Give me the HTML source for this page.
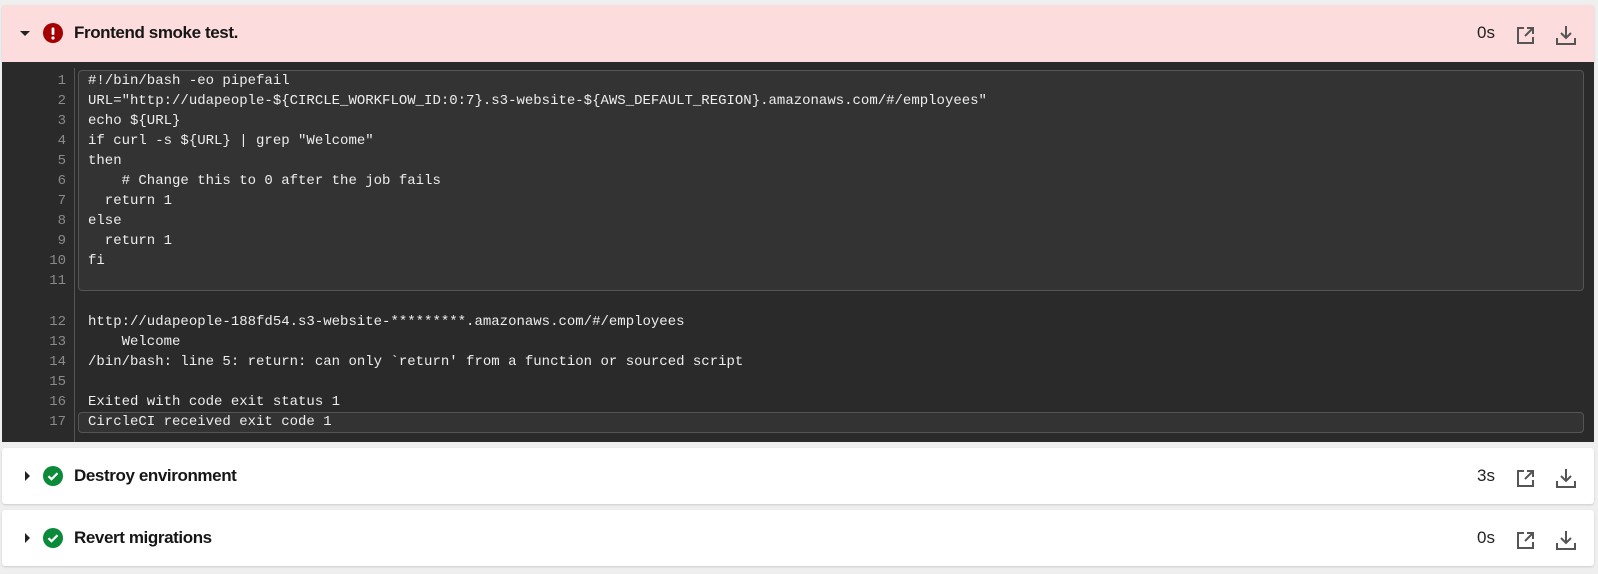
<!DOCTYPE html>
<html><head><style>
body{margin:0;background:#efefef;width:1598px;height:574px;position:relative;overflow:hidden;font-family:"Liberation Sans",Arial,sans-serif}
.card{position:absolute;left:2px;width:1592px;height:56px;background:#fff;border-radius:3px;box-shadow:0 1px 2px rgba(0,0,0,.15)}
.title{position:absolute;left:72px;top:19px;font-size:17px;line-height:18px;font-weight:bold;color:#161616;letter-spacing:-0.4px}
.time{position:absolute;left:1475px;top:19px;font-size:17px;line-height:18px;color:#222}
.ic{position:absolute}
.dark{position:absolute;left:2px;top:62px;width:1592px;height:380px;background:#2a2a2a}
.mono{font-family:"Liberation Mono","Courier New",monospace;font-size:14px;color:#eee;white-space:pre;line-height:20px}
.num{position:absolute;left:0;width:64px;text-align:right;color:#8a8a8a}
.sep{position:absolute;left:72px;top:6px;width:1px;height:374px;background:#555}
.box{position:absolute;left:76px;width:1506px;border:1px solid #555;background:#333;border-radius:4px;box-sizing:border-box}
</style></head><body>
<div class="card" style="top:5px;height:57px;background:#fcdcdc;border-radius:3px 3px 0 0">
  <div style="position:absolute;left:18px;top:26px;border-left:5px solid transparent;border-right:5px solid transparent;border-top:5px solid #222"></div>
  <svg style="position:absolute;left:41px;top:18px" width="20" height="20"><circle cx="10" cy="10" r="10" fill="#a50000"/><rect x="8.6" y="4.5" width="2.8" height="7.5" rx="1" fill="#fff"/><circle cx="10" cy="15" r="1.6" fill="#fff"/></svg>
  <div class="title">Frontend smoke test.</div>
  <div class="time">0s</div>
  <svg class="ic" style="left:1514px;top:20px" width="20" height="20" viewBox="0 0 20 20" fill="none" stroke="#555" stroke-width="2"><path d="M8 3H2v15h15v-6"/><path d="M11 3h6v6M17 3l-8 8"/></svg>
  <svg class="ic" style="left:1553px;top:19px" width="22" height="22" viewBox="0 0 22 22" fill="none" stroke="#555" stroke-width="2"><path d="M11 2v12M6 9l5 5 5-5"/><path d="M2 14v6h18v-6"/></svg>
</div>
<div class="dark">
 <div class="sep"></div>
 <div class="box" style="top:8px;height:221px"></div>
 <div class="box" style="top:350px;height:21px"></div>
 <div class="mono num" style="top:9px">1
2
3
4
5
6
7
8
9
10
11</div>
 <div class="mono" style="position:absolute;left:86px;top:9px">#!/bin/bash -eo pipefail
URL="http://udapeople-${CIRCLE_WORKFLOW_ID:0:7}.s3-website-${AWS_DEFAULT_REGION}.amazonaws.com/#/employees"
echo ${URL}
if curl -s ${URL} | grep "Welcome"
then
    # Change this to 0 after the job fails
  return 1
else
  return 1
fi
</div>
 <div class="mono num" style="top:250px">12
13
14
15
16
17</div>
 <div class="mono" style="position:absolute;left:86px;top:250px">http://udapeople-188fd54.s3-website-*********.amazonaws.com/#/employees
    Welcome
/bin/bash: line 5: return: can only `return' from a function or sourced script

Exited with code exit status 1
CircleCI received exit code 1</div>
</div>
<div class="card" style="top:448px">
 <div style="position:absolute;left:23px;top:23px;border-top:5px solid transparent;border-bottom:5px solid transparent;border-left:5px solid #222"></div>
 <svg style="position:absolute;left:41px;top:18px" width="20" height="20"><circle cx="10" cy="10" r="10" fill="#0b8a3a"/><path d="M5.5 10.2l3 3 6-6" fill="none" stroke="#fff" stroke-width="2.2"/></svg>
 <div class="title">Destroy environment</div>
 <div class="time">3s</div>
 <svg class="ic" style="left:1514px;top:20px" width="20" height="20" viewBox="0 0 20 20" fill="none" stroke="#555" stroke-width="2"><path d="M8 3H2v15h15v-6"/><path d="M11 3h6v6M17 3l-8 8"/></svg>
 <svg class="ic" style="left:1553px;top:19px" width="22" height="22" viewBox="0 0 22 22" fill="none" stroke="#555" stroke-width="2"><path d="M11 2v12M6 9l5 5 5-5"/><path d="M2 14v6h18v-6"/></svg>
</div>
<div class="card" style="top:510px">
 <div style="position:absolute;left:23px;top:23px;border-top:5px solid transparent;border-bottom:5px solid transparent;border-left:5px solid #222"></div>
 <svg style="position:absolute;left:41px;top:18px" width="20" height="20"><circle cx="10" cy="10" r="10" fill="#0b8a3a"/><path d="M5.5 10.2l3 3 6-6" fill="none" stroke="#fff" stroke-width="2.2"/></svg>
 <div class="title">Revert migrations</div>
 <div class="time">0s</div>
 <svg class="ic" style="left:1514px;top:20px" width="20" height="20" viewBox="0 0 20 20" fill="none" stroke="#555" stroke-width="2"><path d="M8 3H2v15h15v-6"/><path d="M11 3h6v6M17 3l-8 8"/></svg>
 <svg class="ic" style="left:1553px;top:19px" width="22" height="22" viewBox="0 0 22 22" fill="none" stroke="#555" stroke-width="2"><path d="M11 2v12M6 9l5 5 5-5"/><path d="M2 14v6h18v-6"/></svg>
</div>
</body></html>
